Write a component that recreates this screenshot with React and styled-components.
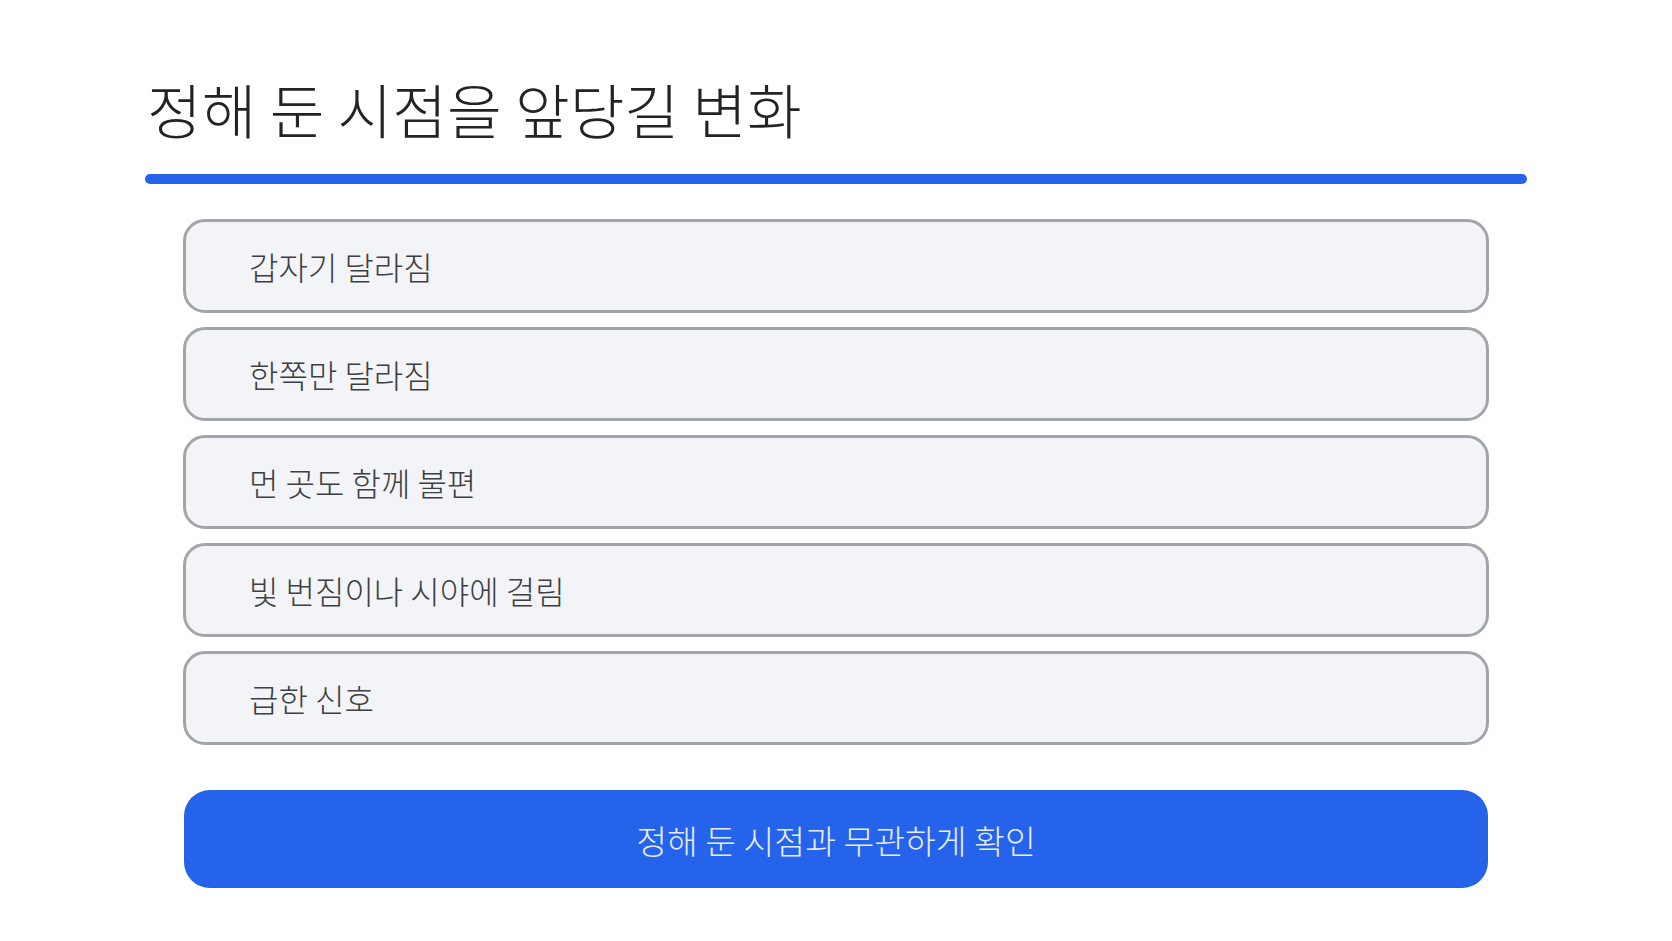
import React from "react";
import styled, { createGlobalStyle } from "styled-components";

const Global = createGlobalStyle`
  html, body {
    margin: 0;
    padding: 0;
    background: #ffffff;
  }
  body {
    font-family: "Noto Sans CJK KR", "Noto Sans", sans-serif;
  }
`;

const Page = styled.div`
  width: 1672px;
  min-height: 941px;
  box-sizing: border-box;
  padding: 68px 145px 0;
  display: flex;
  flex-direction: column;
`;

const Title = styled.h1`
  margin: 0 0 0 2px;
  font-size: 59.5px;
  font-weight: 200;
  line-height: 80px;
  color: #222327;
`;

const Rule = styled.div`
  margin-top: 26px;
  height: 10px;
  border-radius: 5px;
  background: #2563eb;
`;

const List = styled.div`
  margin: 35px 38px 0;
  display: flex;
  flex-direction: column;
  gap: 14px;
`;

const Item = styled.div`
  height: 94px;
  box-sizing: border-box;
  border: 3px solid #a3a5aa;
  border-radius: 22px;
  background: #f2f4f7;
  display: flex;
  align-items: center;
  padding-left: 63px;
  font-size: 32px;
  font-weight: 200;
  color: #3d3f44;
`;

const Action = styled.button`
  margin: 45px 39px 0;
  height: 98px;
  border: none;
  border-radius: 26px;
  background: #2563eb;
  color: #e6edff;
  font-family: inherit;
  font-size: 33.5px;
  font-weight: 200;
  cursor: pointer;
`;

const items = [
  "갑자기 달라짐",
  "한쪽만 달라짐",
  "먼 곳도 함께 불편",
  "빛 번짐이나 시야에 걸림",
  "급한 신호",
];

export default function App() {
  return (
    <>
      <Global />
      <Page>
        <Title>정해 둔 시점을 앞당길 변화</Title>
        <Rule />
        <List>
          {items.map((t) => (
            <Item key={t}>{t}</Item>
          ))}
        </List>
        <Action>정해 둔 시점과 무관하게 확인</Action>
      </Page>
    </>
  );
}
